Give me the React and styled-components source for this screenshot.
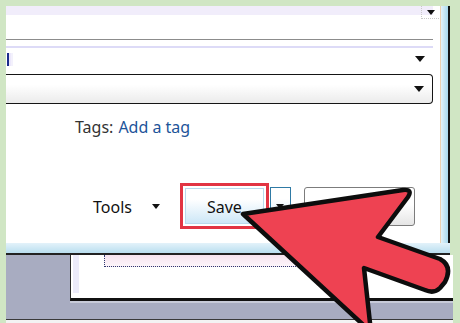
import styled, { createGlobalStyle } from "styled-components";

const GlobalStyle = createGlobalStyle`
    body {
        margin: 0;
        background: #d0e6c4;
    }
`

const Screen = styled.div`
    position: relative;
    width: 460px;
    height: 323px;
    overflow: hidden;
    box-sizing: border-box;
    padding: 6px 0 0 6px;
    background: #d0e6c4;
    display: flex;
    flex-direction: column;
    font-family: "Noto Sans", "DejaVu Sans", sans-serif;
    font-size: 16px;
`

const Window = styled.div`
    width: 444px;
    display: flex;
    flex-direction: column;
`

const WindowBody = styled.div`
    display: flex;
    height: 237px;
`

const Content = styled.div`
    flex: 1;
    background: #fff;
    display: flex;
    flex-direction: column;
`

const SideFrame = styled.div`
    width: 7px;
    border-left: 1px solid #ecd2b4;
    border-right: 2px solid #151515;
    background: linear-gradient(90deg, #e4f3fa, #a9d9ee);
`

const BottomFrame = styled.div`
    height: 10px;
    background: linear-gradient(#e3f2fa, #b9deef);
    border-bottom: 2px solid #222;
`

const Arrow = styled.span`
    display: block;
    width: 0;
    height: 0;
    border-left: ${props => props.size || 4}px solid transparent;
    border-right: ${props => props.size || 4}px solid transparent;
    border-top: ${props => (props.size || 4) + 1}px solid #111;
`

const TopRow = styled.div`
    width: 427px;
    height: 33px;
    display: flex;
    justify-content: flex-end;
    align-items: flex-start;
    background: linear-gradient(#f1edfb 0, #f1edfb 9px, #fff 9px);
    border-bottom: 1px solid #8c8c8c;
`

const TopArrowBox = styled.div`
    margin-right: -8px;
    padding: 4px 5px 3px;
    border: 1px dotted #c9c9c9;
    border-top: none;
`

const ComboRow = styled.div`
    width: 427px;
    height: 24px;
    margin-top: 6px;
    display: flex;
    align-items: center;
    justify-content: space-between;
    border-top: 2px solid #dddbf7;
    padding-right: 8px;
    box-sizing: border-box;
`

const Caret = styled.span`
    width: 2px;
    height: 13px;
    margin-left: 1px;
    background: #1b2c8c;
    box-shadow: 2px 0 0 #ece8fb, 4px 0 0 #f3f1fc;
`

const SelectBox = styled.div`
    width: 427px;
    height: 30px;
    margin-top: 4px;
    box-sizing: border-box;
    border: 1px solid #151515;
    border-left: none;
    border-radius: 0 4px 4px 0;
    background: linear-gradient(#fff 35%, #ebebeb);
    display: flex;
    align-items: center;
    justify-content: flex-end;
    padding-right: 8px;
`

const TagsRow = styled.div`
    margin-top: 12px;
    padding-left: 69px;
    line-height: 22px;
    color: #333;
    display: flex;
`

const TagLink = styled.span`
    margin-left: 5px;
    color: #1d5499;
`

const ButtonRow = styled.div`
    margin-top: 45px;
    height: 46px;
    padding-left: 87px;
    display: flex;
    align-items: center;
`

const ToolsLabel = styled.span`
    color: #111;
    line-height: 22px;
    margin-right: 20px;
    padding-top: 2px;
`

const Highlight = styled.div`
    margin-left: 20px;
    width: 89px;
    height: 46px;
    box-sizing: border-box;
    border: 3px solid #e23443;
    padding: 2px;
    display: flex;
`

const SaveButton = styled.div`
    flex: 1;
    border: 1px solid #b9d9ec;
    background: linear-gradient(#fff 30%, #cde7f7);
    display: flex;
    align-items: center;
    justify-content: center;
    padding-top: 2px;
    color: #111;
`

const SplitButton = styled.div`
    margin-left: 1px;
    width: 21px;
    height: 38px;
    box-sizing: border-box;
    border: 1px solid #2f7aa5;
    background: linear-gradient(#fff 30%, #cde7f7);
    display: flex;
    align-items: center;
    justify-content: center;
`

const CancelButton = styled.div`
    margin-left: 13px;
    width: 111px;
    height: 39px;
    box-sizing: border-box;
    border: 1px solid #7c7c7c;
    border-radius: 3px;
    background: linear-gradient(#fff 45%, #e5e5e5);
    display: flex;
    align-items: center;
    justify-content: center;
    color: #111;
`

const Desk = styled.div`
    width: 447px;
    height: 65px;
    background: #a8acc1;
    border-bottom: 1px solid #3a3a3a;
`

const BackPanel = styled.div`
    margin-left: 64px;
    height: 43px;
    background: #fff;
    border-left: 1px solid #2a2a2a;
    border-bottom: 3px solid #111;
    box-shadow: 0 2px 0 #c7cad8;
    display: flex;
`

const PanelStrip = styled.div`
    width: 6px;
    margin-left: 2px;
    height: 38px;
    background: #ecebfa;
`

const DottedField = styled.div`
    margin-left: 25px;
    width: 300px;
    height: 11px;
    border: 1px dotted #2e3a70;
    border-top: none;
    background: linear-gradient(#f6e3ef, #fdf5fa);
`

const Footer = styled.div`
    width: 447px;
    height: 3px;
    background: #f3f3f3;
`

const Overlay = styled.svg`
    position: absolute;
    left: 0;
    top: 0;
    pointer-events: none;
`

const App = () => {
    return (
        <Screen>
            <GlobalStyle />
            <Window>
                <WindowBody>
                    <Content>
                        <TopRow>
                            <TopArrowBox><Arrow size={4} /></TopArrowBox>
                        </TopRow>
                        <ComboRow>
                            <Caret />
                            <Arrow size={5} />
                        </ComboRow>
                        <SelectBox>
                            <Arrow size={5} />
                        </SelectBox>
                        <TagsRow>
                            Tags:<TagLink>Add a tag</TagLink>
                        </TagsRow>
                        <ButtonRow>
                            <ToolsLabel>Tools</ToolsLabel>
                            <Arrow size={4} />
                            <Highlight>
                                <SaveButton>Save</SaveButton>
                            </Highlight>
                            <SplitButton><Arrow size={4} /></SplitButton>
                            <CancelButton>Cancel</CancelButton>
                        </ButtonRow>
                    </Content>
                    <SideFrame />
                </WindowBody>
                <BottomFrame />
            </Window>
            <Desk>
                <BackPanel>
                    <PanelStrip />
                    <DottedField />
                </BackPanel>
            </Desk>
            <Footer />
            <Overlay width="460" height="323" viewBox="0 0 460 323">
                <path
                    d="M243 214 L403 190 Q413 189 408 197 L378 237 L440 259 Q453 266 445 282 L440 288 Q434 294 425 290 L364 268 L371 332 Z"
                    fill="#ee4252"
                    stroke="#0d0d0d"
                    strokeWidth="4.5"
                    strokeLinejoin="round"
                />
            </Overlay>
        </Screen>
    )
}

export default App;
